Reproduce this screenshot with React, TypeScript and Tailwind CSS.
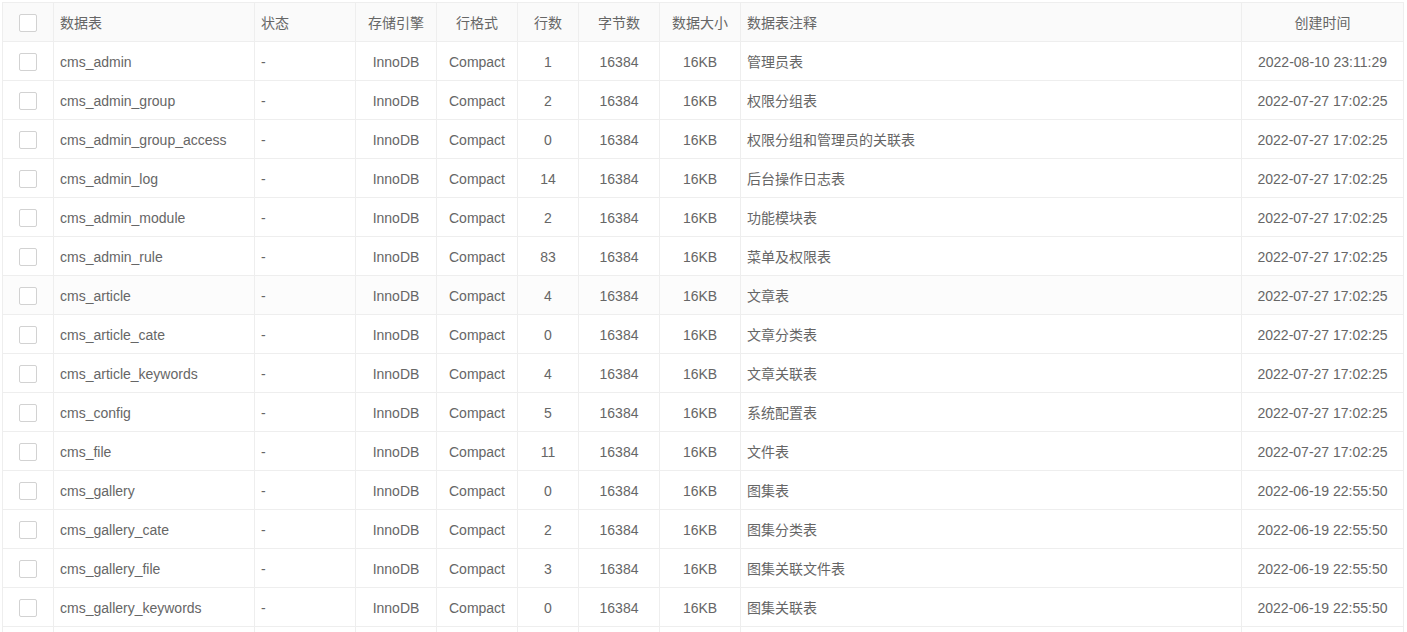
const rows = [
  ["cms_admin", "1", "管理员表", "2022-08-10 23:11:29"],
  ["cms_admin_group", "2", "权限分组表", "2022-07-27 17:02:25"],
  ["cms_admin_group_access", "0", "权限分组和管理员的关联表", "2022-07-27 17:02:25"],
  ["cms_admin_log", "14", "后台操作日志表", "2022-07-27 17:02:25"],
  ["cms_admin_module", "2", "功能模块表", "2022-07-27 17:02:25"],
  ["cms_admin_rule", "83", "菜单及权限表", "2022-07-27 17:02:25"],
  ["cms_article", "4", "文章表", "2022-07-27 17:02:25"],
  ["cms_article_cate", "0", "文章分类表", "2022-07-27 17:02:25"],
  ["cms_article_keywords", "4", "文章关联表", "2022-07-27 17:02:25"],
  ["cms_config", "5", "系统配置表", "2022-07-27 17:02:25"],
  ["cms_file", "11", "文件表", "2022-07-27 17:02:25"],
  ["cms_gallery", "0", "图集表", "2022-06-19 22:55:50"],
  ["cms_gallery_cate", "2", "图集分类表", "2022-06-19 22:55:50"],
  ["cms_gallery_file", "3", "图集关联文件表", "2022-06-19 22:55:50"],
  ["cms_gallery_keywords", "0", "图集关联表", "2022-06-19 22:55:50"],
];

const widths = [51, 201, 101, 81, 81, 61, 81, 81, 501, 162];
const cell = "h-[39px] border border-[#eeeeee] px-[6px] pt-[2px] pb-0 font-normal whitespace-nowrap";

function Checkbox() {
  return <div className="mx-auto size-[18px] rounded-[2px] border border-[#d2d2d2] bg-white" />;
}

export default function App() {
  return (
    <div className="h-[632px] overflow-hidden bg-white pl-[2px] pt-[2px] text-[14px] leading-[20px] text-[#666666] [font-family:'Liberation_Sans','Noto_Sans_CJK_SC',sans-serif]">
      <table className="w-[1401px] table-fixed border-collapse">
        <colgroup>
          {widths.map((w, i) => (
            <col key={i} style={{ width: w }} />
          ))}
        </colgroup>
        <thead>
          <tr className="bg-[#fafafa]">
            <th className={cell}><Checkbox /></th>
            <th className={`${cell} text-left`}>数据表</th>
            <th className={`${cell} text-left`}>状态</th>
            <th className={`${cell} text-center`}>存储引擎</th>
            <th className={`${cell} text-center`}>行格式</th>
            <th className={`${cell} text-center`}>行数</th>
            <th className={`${cell} text-center`}>字节数</th>
            <th className={`${cell} text-center`}>数据大小</th>
            <th className={`${cell} text-left`}>数据表注释</th>
            <th className={`${cell} text-center`}>创建时间</th>
          </tr>
        </thead>
        <tbody>
          {rows.map(([name, count, comment, time]) => (
            <tr key={name} className={name === "cms_article" ? "bg-[#fcfcfc]" : ""}>
              <td className={cell}><Checkbox /></td>
              <td className={cell}>{name}</td>
              <td className={cell}>-</td>
              <td className={`${cell} text-center`}>InnoDB</td>
              <td className={`${cell} text-center`}>Compact</td>
              <td className={`${cell} text-center`}>{count}</td>
              <td className={`${cell} text-center`}>16384</td>
              <td className={`${cell} text-center`}>16KB</td>
              <td className={cell}>{comment}</td>
              <td className={`${cell} text-center`}>{time}</td>
            </tr>
          ))}
          <tr>
            {widths.map((_, i) => (
              <td key={i} className={cell} />
            ))}
          </tr>
        </tbody>
      </table>
    </div>
  );
}
